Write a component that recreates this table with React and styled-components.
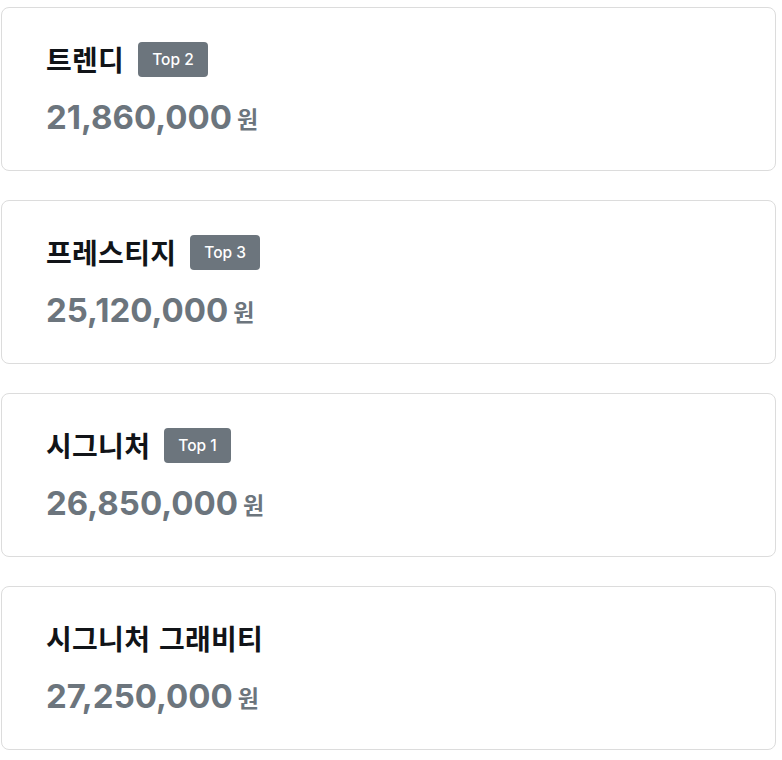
import React from 'react'
import styled, {createGlobalStyle} from 'styled-components'

const Global = createGlobalStyle`
  body {
    margin: 0;
    background: #fff;
    font-family: Inter, "Noto Sans CJK KR", sans-serif;
  }
`

const List = styled.div`
  display: flex;
  flex-direction: column;
  gap: 29px;
  padding: 7px 6px 0 1px;
`

const Card = styled.div`
  border: 1px solid #dcdcdc;
  border-radius: 8px;
  height: 164px;
  box-sizing: border-box;
  padding: 33px 44px 0;
`

const TitleRow = styled.div`
  display: flex;
  align-items: center;
  gap: 14px;
  height: 36px;
`

const Title = styled.h3`
  margin: 0;
  font-size: 28px;
  font-weight: 700;
  color: #111418;
  font-family: "Noto Sans CJK KR", "Noto Sans", sans-serif;
  letter-spacing: 0.3px;
  word-spacing: 2px;
`

const Badge = styled.span`
  display: inline-flex;
  align-items: center;
  justify-content: center;
  height: 35px;
  padding: 0 14px;
  border-radius: 4px;
  background: #6c757d;
  color: #fff;
  font-size: 15.5px;
  font-weight: 500;
  font-family: Inter, sans-serif;
`

const PriceRow = styled.div`
  display: flex;
  align-items: center;
  gap: 5px;
  margin-top: 21px;
  color: #6c757d;
`

const Amount = styled.span`
  font-size: 33px;
  font-weight: 700;
  line-height: 1.2;
  font-family: Inter, sans-serif;
`

const Won = styled.span`
  font-size: 23px;
  font-weight: 700;
  font-family: "Noto Sans CJK KR", sans-serif;
`

const items = [
  {name: '트렌디', rank: 2, price: '21,860,000'},
  {name: '프레스티지', rank: 3, price: '25,120,000'},
  {name: '시그니처', rank: 1, price: '26,850,000'},
  {name: '시그니처 그래비티', price: '27,250,000'},
]

const App = () => (
  <>
    <Global />
    <List>
      {items.map((item) => (
        <Card key={item.name}>
          <TitleRow>
            <Title>{item.name}</Title>
            {item.rank && <Badge>Top {item.rank}</Badge>}
          </TitleRow>
          <PriceRow>
            <Amount>{item.price}</Amount>
            <Won>원</Won>
          </PriceRow>
        </Card>
      ))}
    </List>
  </>
)

export default App
